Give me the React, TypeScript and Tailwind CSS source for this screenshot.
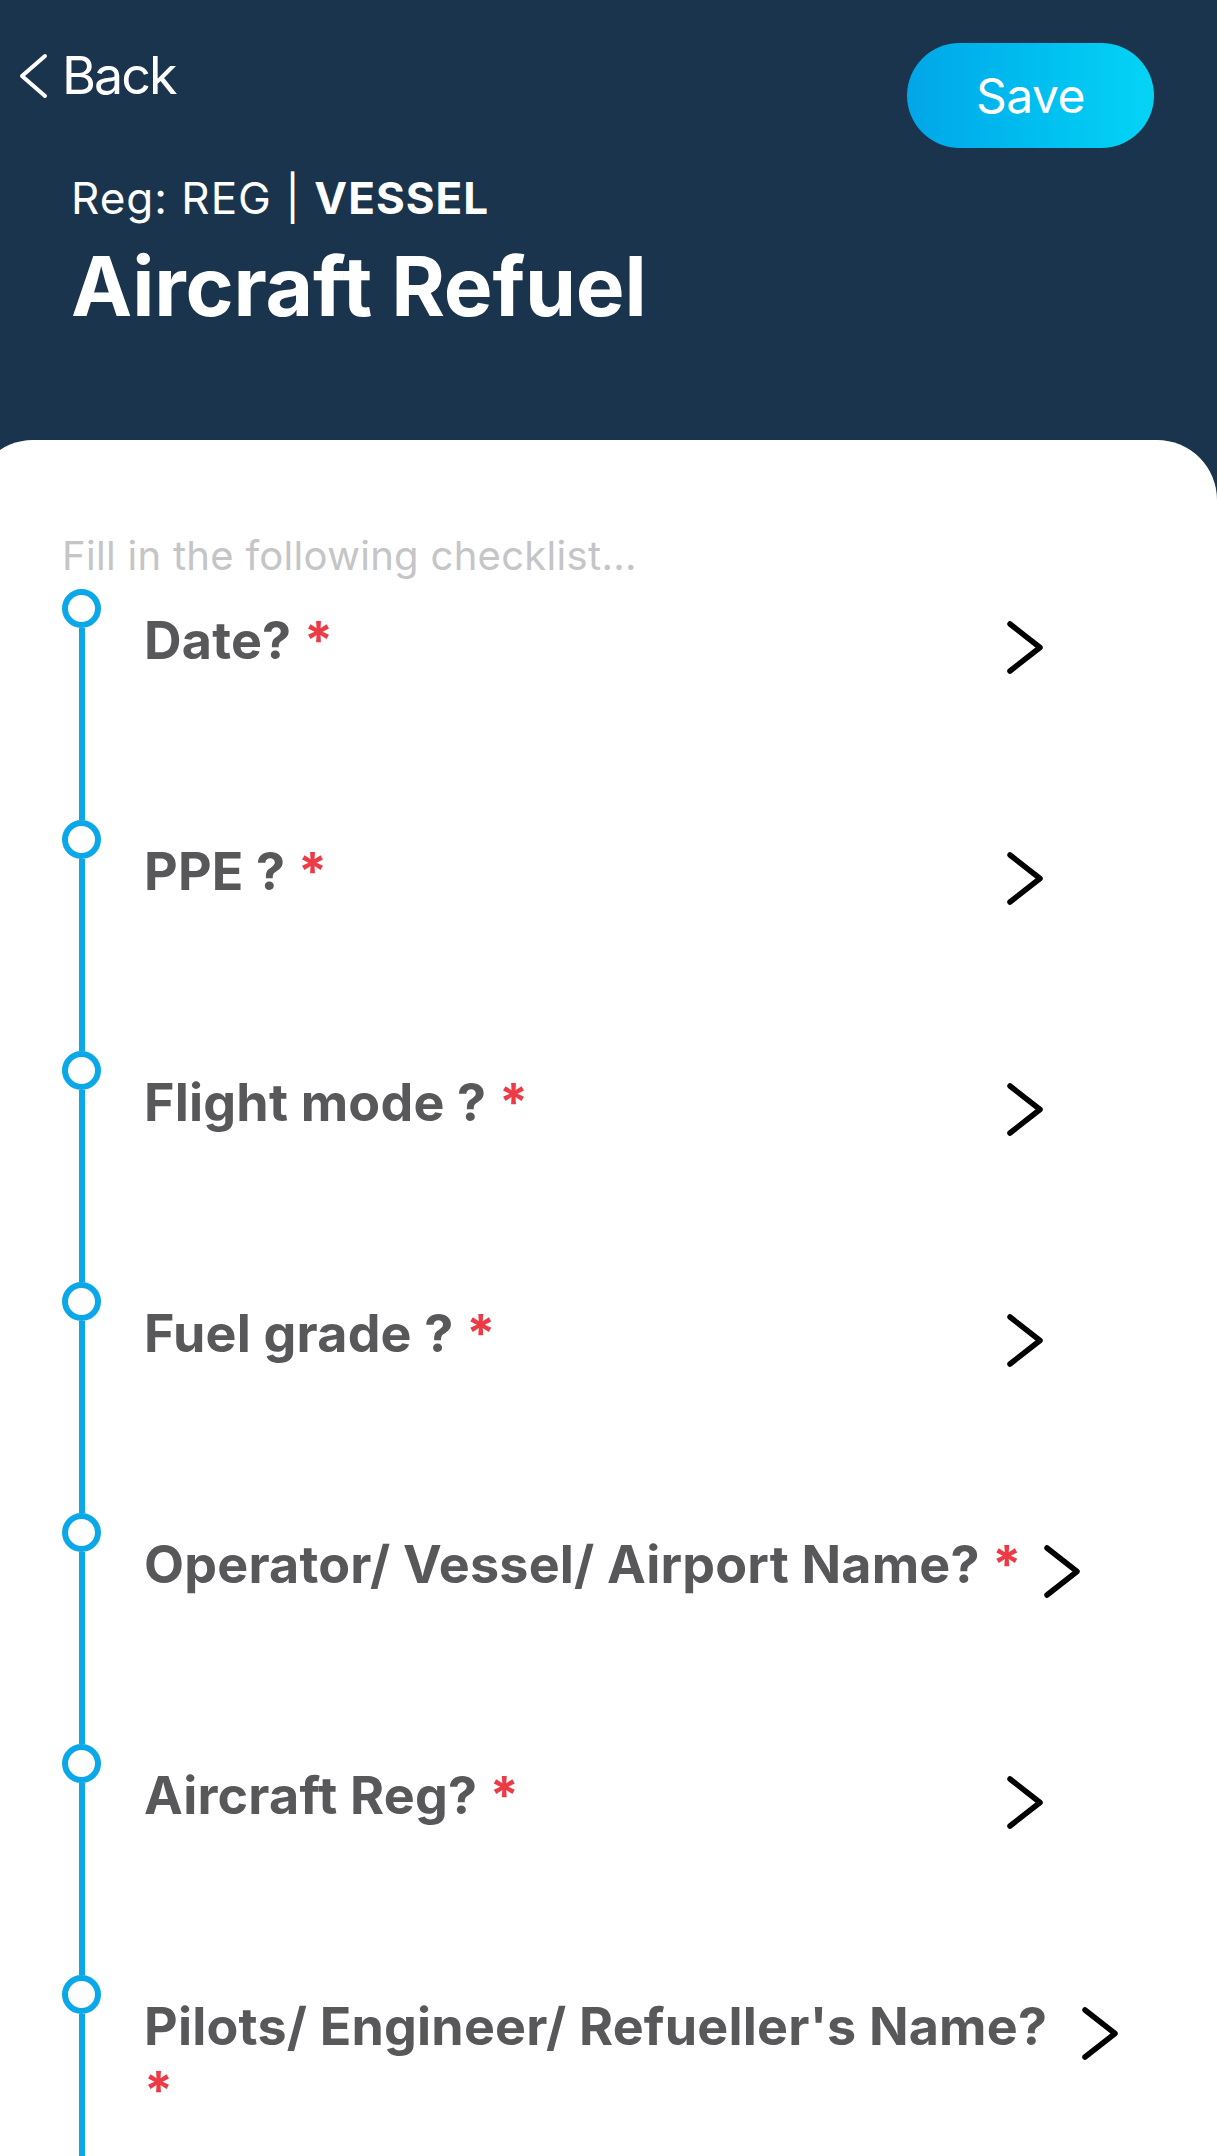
import React from "react";

const items = [
  "Date?",
  "PPE ?",
  "Flight mode ?",
  "Fuel grade ?",
  "Operator/ Vessel/ Airport Name?",
  "Aircraft Reg?",
  "Pilots/ Engineer/ Refueller's Name?",
];

const ChecklistItem = ({ label }: { label: string }) => {
  return (
    <div className="flex flex-row h-[231px]">
      <div className="flex flex-col items-center w-[39px] shrink-0">
        <div className="w-[39px] h-[39px] rounded-full border-[6px] border-[#0aa8e8] bg-white shrink-0" />
        <div className="w-[6px] flex-1 bg-[#0aa8e8]" />
      </div>
      <div className="flex flex-row items-start pl-[43px]">
        <div className="min-w-[841px] pt-[20px] text-[52px] leading-[64px] font-bold text-[#58585b] tracking-[0.2px]">
          {label} <span className="text-[#ee3a45]">*</span>
        </div>
        <svg
          width="42"
          height="59"
          viewBox="0 0 42 59"
          className="shrink-0 mt-[29px] ml-[19px]"
        >
          <path
            d="M6 6 L36 29.5 L6 53"
            fill="none"
            stroke="#000"
            strokeWidth="5.5"
            strokeLinecap="round"
            strokeLinejoin="round"
          />
        </svg>
      </div>
    </div>
  );
};

export default function App() {
  return (
    <div
      className="h-[2156px] overflow-hidden bg-[#1a344d]"
      style={{ fontFamily: "Inter, 'Liberation Sans', sans-serif" }}
    >
      {/* header */}
      <div className="flex flex-row items-start justify-between pl-[16px] pr-[63px] pt-[43px]">
        <div className="flex flex-row items-center mt-[2px] text-white">
          <svg width="34" height="48" viewBox="0 0 34 48" className="mr-[12px]">
            <path
              d="M29 4 L6 24 L29 44"
              fill="none"
              stroke="#fff"
              strokeWidth="4"
              strokeLinecap="round"
              strokeLinejoin="round"
            />
          </svg>
          <span className="text-[52px] leading-[62px] tracking-[-2px]">Back</span>
        </div>
        <button className="w-[247px] h-[105px] rounded-full bg-gradient-to-r from-[#02a6e8] to-[#05d4f6] text-white text-[48px] leading-none tracking-[-0.5px]">
          Save
        </button>
      </div>
      <div className="pl-[71px] mt-[24px]">
        <div className="text-white text-[44px] leading-[52px] tracking-[1px]">
          Reg: REG | <span className="font-bold">VESSEL</span>
        </div>
        <div className="mt-[14px] text-white text-[82px] leading-[98px] font-bold tracking-[-0.2px]">
          Aircraft Refuel
        </div>
      </div>

      {/* card */}
      <div className="mt-[104px] -ml-[27px] bg-white rounded-t-[60px] pl-[89px] pr-[96px] pt-[92px]">
        <div className="text-[40px] leading-[47px] text-[#c5c5c8] tracking-[0.3px]">
          Fill in the following checklist...
        </div>
        <div className="mt-[10px] flex flex-col">
          {items.map((label) => (
            <ChecklistItem key={label} label={label} />
          ))}
        </div>
      </div>
    </div>
  );
}
